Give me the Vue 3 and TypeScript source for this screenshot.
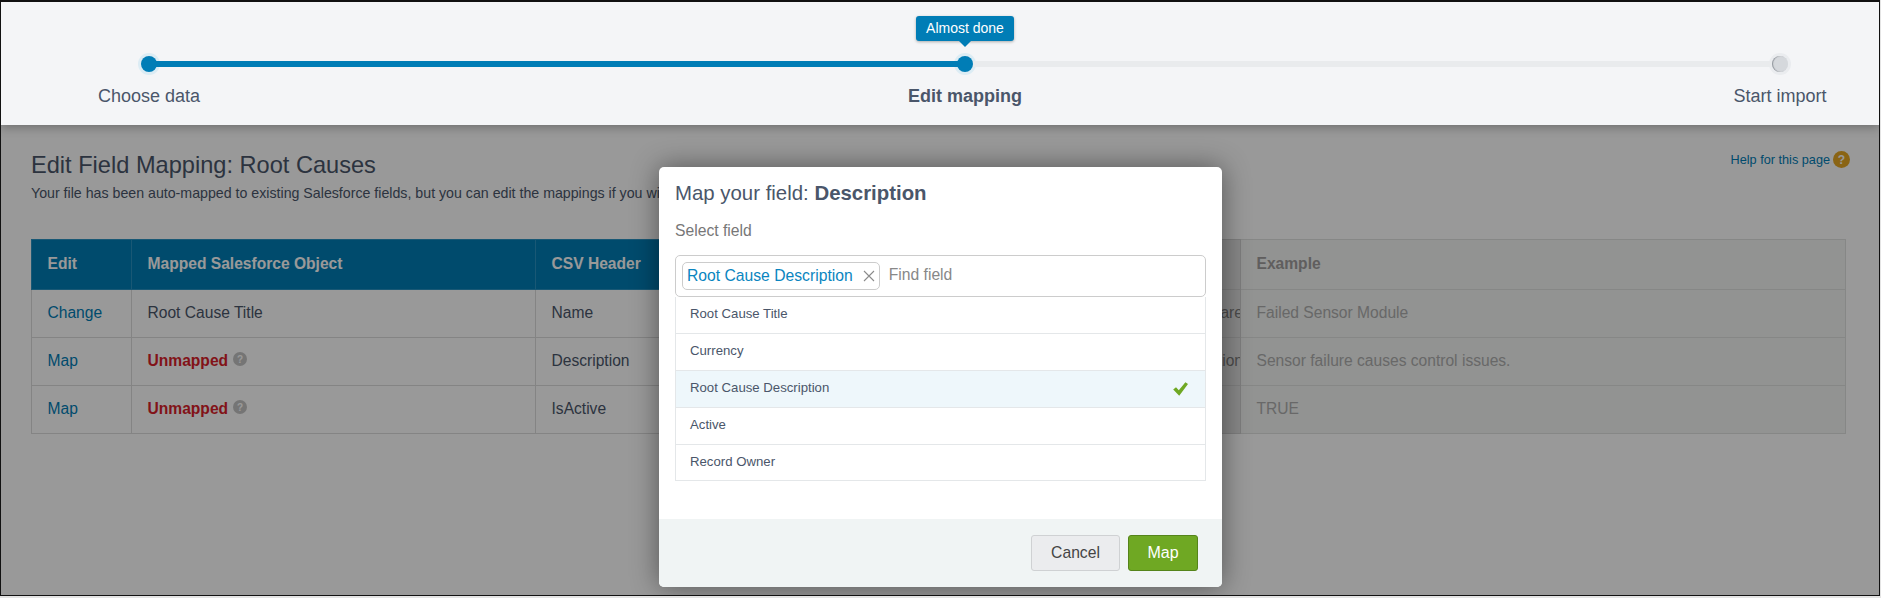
<script setup lang="ts">
import { ref } from "vue";

type Row = {
  action: string;
  mapped: string | null;
  csv: string;
  info: string;
  example: string;
};

const rows: Row[] = [
  { action: "Change", mapped: "Root Cause Title", csv: "Name", info: "Hardware", example: "Failed Sensor Module" },
  { action: "Map", mapped: null, csv: "Description", info: "Description", example: "Sensor failure causes control issues." },
  { action: "Map", mapped: null, csv: "IsActive", info: "", example: "TRUE" },
];

const fields = ["Root Cause Title", "Currency", "Root Cause Description", "Active", "Record Owner"];
const selected = ref("Root Cause Description");
</script>

<template>
  <div class="frame">
    <header class="stepper">
      <div class="steps">
        <span class="dot done" />
        <span class="bar done" />
        <span class="dot done">
          <span class="tip">Almost done</span>
        </span>
        <span class="bar" />
        <span class="dot" />
        <span class="label first">Choose data</span>
        <span class="label second">Edit mapping</span>
        <span class="label third">Start import</span>
      </div>
    </header>

    <main class="content">
      <div class="top">
        <div>
          <h1>Edit Field Mapping: Root Causes</h1>
          <p>Your file has been auto-mapped to existing Salesforce fields, but you can edit the mappings if you wish.</p>
        </div>
        <a class="help">Help for this page <span class="help-icon">?</span></a>
      </div>

      <table>
        <colgroup>
          <col style="width: 100px" />
          <col style="width: 404px" />
          <col style="width: 265px" />
          <col style="width: 440px" />
          <col style="width: 605px" />
        </colgroup>
        <thead>
          <tr>
            <th>Edit</th>
            <th>Mapped Salesforce Object</th>
            <th>CSV Header</th>
            <th class="info" />
            <th class="example">Example</th>
          </tr>
        </thead>
        <tbody>
          <tr v-for="row in rows" :key="row.csv">
            <td><a class="link">{{ row.action }}</a></td>
            <td>
              <template v-if="row.mapped">{{ row.mapped }}</template>
              <template v-else>
                <strong class="unmapped">Unmapped</strong>
                <span class="hint">?</span>
              </template>
            </td>
            <td>{{ row.csv }}</td>
            <td class="info"><span class="clip">{{ row.info }}</span></td>
            <td class="example">{{ row.example }}</td>
          </tr>
        </tbody>
      </table>
    </main>

    <div class="overlay" />

    <section class="modal">
      <div class="modal-body">
        <h2>Map your field: <b>Description</b></h2>
        <div class="select-label">Select field</div>
        <div class="picker">
          <span class="chip">
            {{ selected }}
            <svg class="chip-x" viewBox="0 0 12 12" width="12" height="12">
              <path d="M1 1l10 10M11 1L1 11" fill="none" stroke="#8b8b8b" stroke-width="1.1" />
            </svg>
          </span>
          <input class="find" placeholder="Find field" />
        </div>
        <ul class="options">
          <li v-for="field in fields" :key="field" :class="{ active: field === selected }">
            <span>{{ field }}</span>
            <svg v-if="field === selected" viewBox="0 0 15 14" width="15" height="14">
              <path d="M0.2 7.6L3 5.2l2.8 3L12.4 0.2 15 2 6.2 13.8z" fill="#6fa823" />
            </svg>
          </li>
        </ul>
      </div>
      <footer class="modal-foot">
        <button class="btn cancel">Cancel</button>
        <button class="btn map">Map</button>
      </footer>
    </section>
  </div>
</template>

<style>
html,
body {
  margin: 0;
  background: #e4e4e4;
}
</style>

<style scoped>
.frame {
  position: relative;
  box-sizing: border-box;
  width: 1880px;
  height: 596px;
  border: 1px solid #111;
  border-top-width: 2px;
  background: #fff;
  overflow: hidden;
  font-family: "Liberation Sans", Arial, sans-serif;
  color: #4a566a;
}

.stepper {
  position: relative;
  z-index: 3;
  box-sizing: border-box;
  height: 123px;
  padding: 54px 0 0 140px;
  background: #f4f5f7;
  box-shadow: 0 2px 10px rgba(0, 0, 0, 0.3);
}

.steps {
  display: grid;
  grid-template-columns: 16px 800px 16px 799px 16px;
  grid-template-rows: 16px auto;
  align-items: center;
  width: 1647px;
}

.dot {
  position: relative;
  width: 16px;
  height: 16px;
}

/* halo goes under the bar, core over it */
.dot::before,
.dot::after {
  content: "";
  position: absolute;
  border-radius: 50%;
}

.dot::before {
  inset: -3px;
  z-index: 0;
  background: #eaecef;
}

.dot::after {
  inset: 0;
  z-index: 2;
  background: #d5d8dc;
  box-shadow: inset 1px 0 1px #8f949b;
}

.dot.done::before {
  background: #dcecf4;
}

.dot.done::after {
  background: #007db6;
  box-shadow: none;
}

.bar {
  position: relative;
  z-index: 1;
  height: 6px;
  margin: 0 -8px;
  background: #e9ebed;
}

.bar.done {
  background: #007db6;
}

.tip {
  position: absolute;
  left: 50%;
  bottom: 31px;
  width: 98px;
  height: 25px;
  margin-left: -49px;
  border-radius: 3px;
  background: #007db6;
  box-shadow: 0 1px 3px rgba(0, 0, 0, 0.3);
  color: #fff;
  font-size: 14px;
  line-height: 24px;
  text-align: center;
  white-space: nowrap;
}

.tip::after {
  content: "";
  position: absolute;
  left: 50%;
  top: 25px;
  margin-left: -6px;
  border: 6px solid transparent;
  border-bottom: 0;
  border-top-color: #007db6;
}

.label {
  margin-top: 12px;
  justify-self: center;
  grid-row: 2;
  font-size: 18px;
  line-height: 24px;
  white-space: nowrap;
}

.first {
  grid-column: 1;
}

.second {
  grid-column: 3;
  font-weight: 700;
}

.third {
  grid-column: 5;
}

.content {
  padding: 26px 29px 0 30px;
  color: #4a566a;
}

.top {
  display: flex;
  justify-content: space-between;
  align-items: flex-start;
}

h1 {
  margin: 0;
  font-size: 23.6px;
  font-weight: 400;
  line-height: 28px;
}

p {
  margin: 5px 0 0;
  font-size: 14.2px;
  line-height: 18px;
}

.help {
  display: flex;
  align-items: center;
  gap: 3px;
  color: #007db6;
  font-size: 12.7px;
}

.help-icon {
  display: flex;
  align-items: center;
  justify-content: center;
  width: 17px;
  height: 17px;
  border-radius: 50%;
  background: #e6a722;
  color: #fff;
  font-size: 12px;
  font-weight: 700;
}

table {
  width: 1814px;
  margin-top: 37px;
  border-collapse: collapse;
  table-layout: fixed;
  font-size: 15.6px;
}

th,
td {
  padding: 0 16px 0 15.5px;
  border: 1px solid #dcdcdc;
  text-align: left;
  white-space: nowrap;
  overflow: hidden;
}

th {
  box-sizing: border-box;
  height: 50px;
  padding-bottom: 2px;
  background: #007db6;
  border-color: #2a93c4;
  color: #fff;
  font-weight: 700;
}

td {
  box-sizing: border-box;
  height: 48px;
  padding-bottom: 2px;
}

.link {
  color: #007db6;
}

.unmapped {
  color: #d91e2b;
}

.hint {
  display: inline-flex;
  align-items: center;
  justify-content: center;
  width: 14px;
  height: 14px;
  margin-left: 5px;
  border-radius: 50%;
  background: #c4c4c4;
  color: #fff;
  font-size: 10px;
  font-weight: 700;
  vertical-align: 3px;
}

th.info,
td.info {
  padding-right: 0;
  background: #e2e2e2;
  border-color: #d0d0d0;
  color: #7d7d7d;
  text-align: right;
}

.clip {
  display: inline-block;
  margin-right: -3px;
}

th.example,
td.example {
  background: #f3f5f3;
  border-color: #dfe1df;
  color: #aeaeae;
}

th.example {
  color: #a09d9d;
}

.overlay {
  position: absolute;
  inset: 0;
  z-index: 1;
  background: rgba(0, 0, 0, 0.4);
}

.modal {
  position: absolute;
  z-index: 2;
  left: 658px;
  top: 165px;
  display: flex;
  flex-direction: column;
  width: 563px;
  height: 420px;
  border-radius: 5px;
  background: #fff;
  box-shadow: 0 0 28px rgba(0, 0, 0, 0.45);
  overflow: hidden;
}

.modal-body {
  padding: 14px 16px 0;
}

h2 {
  margin: 0;
  font-size: 20.4px;
  font-weight: 400;
  line-height: 24px;
  color: #4a566a;
}

.select-label {
  margin-top: 16px;
  font-size: 15.7px;
  line-height: 20px;
  color: #777;
}

.picker {
  display: flex;
  align-items: center;
  gap: 8px;
  box-sizing: border-box;
  height: 42px;
  margin-top: 14px;
  padding: 0 6px;
  border: 1px solid #ccc;
  border-radius: 5px;
}

.chip {
  display: flex;
  align-items: center;
  gap: 10px;
  box-sizing: border-box;
  height: 28px;
  padding: 0 4px 1px 4px;
  border: 1px solid #ccc;
  border-radius: 5px;
  color: #0a85c0;
  font-size: 15.7px;
  white-space: nowrap;
}

.find {
  flex: 1;
  min-width: 0;
  padding: 0 0 2px 1px;
  border: 0;
  outline: 0;
  font: inherit;
  font-size: 15.7px;
}

.find::placeholder {
  color: #888;
  opacity: 1;
}

.options {
  margin: 0;
  padding: 0;
  list-style: none;
  border: 1px solid #e4e7e9;
  border-top: 0;
}

.options li {
  display: flex;
  align-items: center;
  justify-content: space-between;
  box-sizing: border-box;
  height: 37px;
  padding: 0 17px 0 14px;
  border-bottom: 1px solid #e4e7e9;
  font-size: 13.2px;
}

.options li span {
  padding-bottom: 3px;
}

.options li:last-child {
  border-bottom: 0;
  height: 35px;
}

.options li.active {
  background: #eef7fb;
}

.modal-foot {
  display: flex;
  justify-content: flex-end;
  gap: 8px;
  box-sizing: border-box;
  height: 68px;
  margin-top: auto;
  padding: 16px 24px;
  background: #f0f4f4;
}

.btn {
  height: 36px;
  padding: 0;
  border-radius: 3px;
  font-family: inherit;
  font-size: 15.7px;
}

.cancel {
  width: 89px;
  border: 1px solid #cfd1d3;
  background: #ebecee;
  color: #444;
}

.map {
  width: 70px;
  border: 1px solid #55841a;
  background: #6fa823;
  color: #fff;
  font-size: 16px;
}
</style>
